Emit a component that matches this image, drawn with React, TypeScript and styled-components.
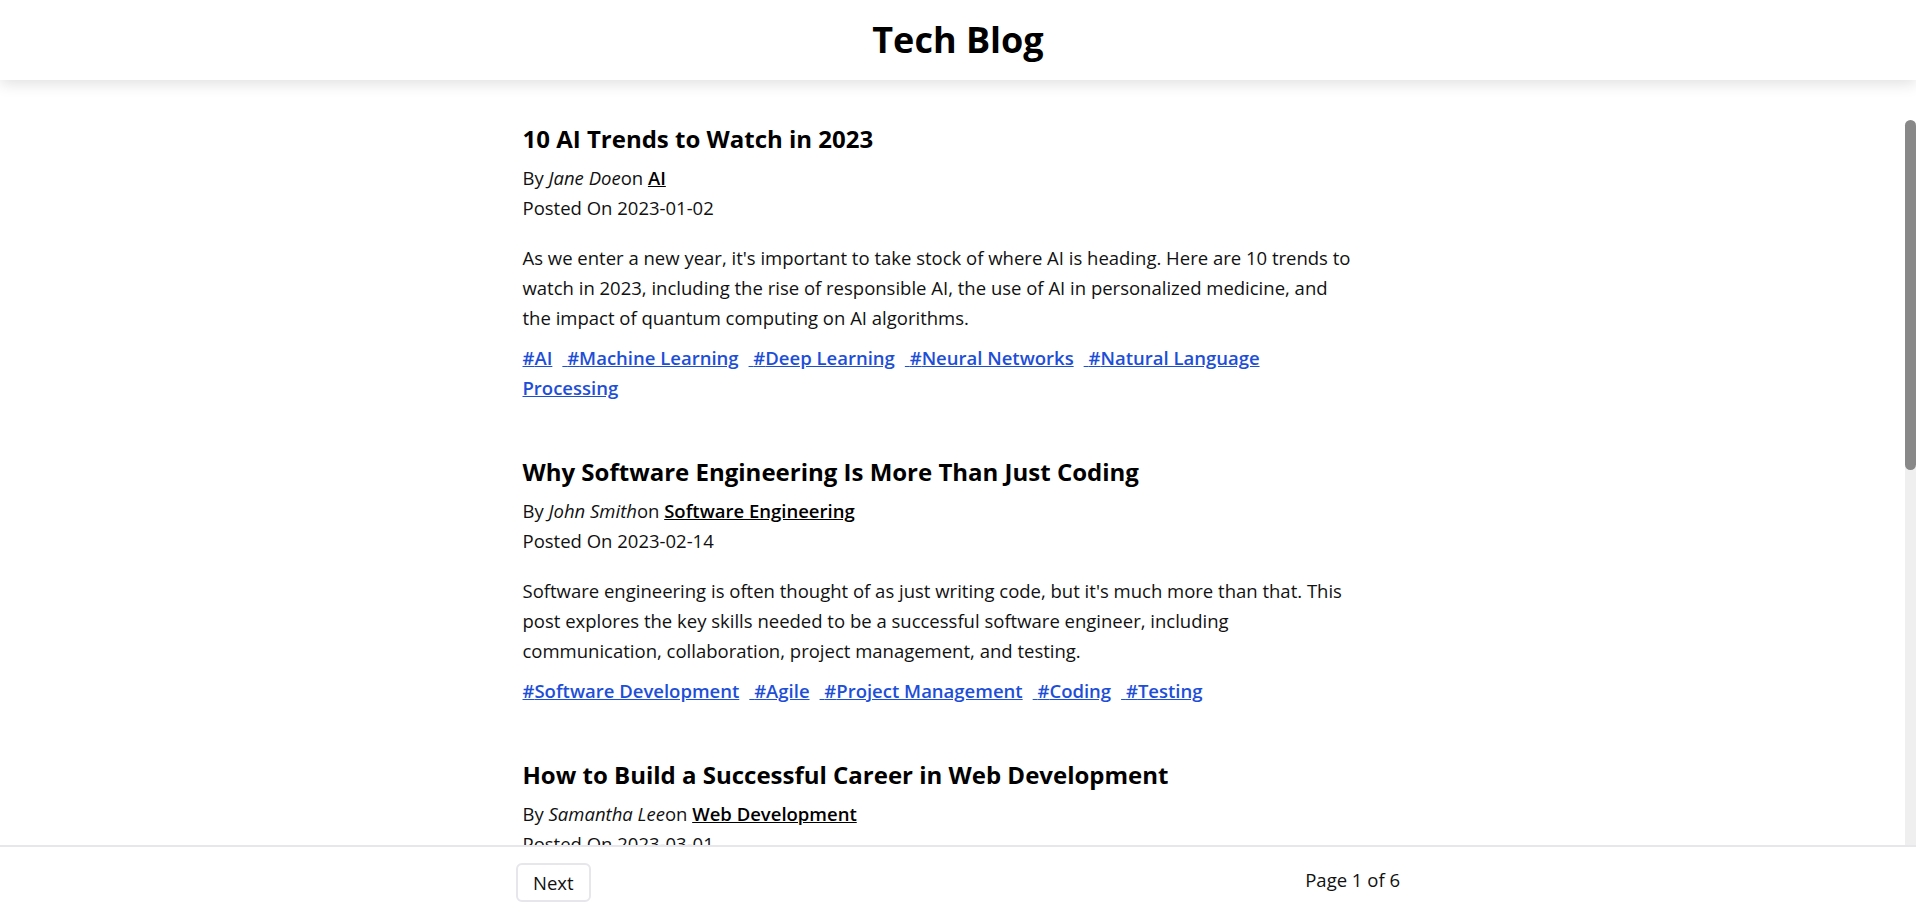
import React from "react";
import styled, { createGlobalStyle } from "styled-components";

const GlobalStyle = createGlobalStyle`
  html, body {
    margin: 0;
    padding: 0;
    height: 100%;
    background: #ffffff;
    overflow: hidden;
  }
  body {
    font-family: "Open Sans", "Noto Sans", "Liberation Sans", sans-serif;
    color: #111111;
  }
  #root { height: 100%; }
  * { box-sizing: border-box; }
`;

const Shell = styled.div`
  display: flex;
  flex-direction: column;
  height: 100vh;
`;

const Header = styled.header`
  position: relative;
  z-index: 2;
  flex: 0 0 80px;
  display: flex;
  align-items: center;
  justify-content: center;
  background: #ffffff;
  box-shadow: 0 4px 14px rgba(0, 0, 0, 0.12);
`;

const SiteTitle = styled.h1`
  margin: 0;
  font-size: 36px;
  line-height: 44px;
  font-weight: 700;
  color: #000;
`;

const Main = styled.main`
  flex: 1 1 auto;
  min-height: 0;
  display: flex;
`;

const Scroller = styled.div`
  flex: 1 1 auto;
  overflow: hidden;
`;

const Rail = styled.div`
  flex: 0 0 11px;
  display: flex;
  flex-direction: column;
  padding-top: 40px;
  background: #ffffff;
`;

const Track = styled.div`
  flex: 1 1 auto;
  background: #efefef;
  border-radius: 6px 6px 0 0;
`;

const Thumb = styled.div`
  height: 350px;
  background: #888888;
  border-radius: 6px;
`;

const Content = styled.div`
  width: 860px;
  margin: 0 auto;
  padding: 41px 28px 0 0;
`;

const Post = styled.article`
  margin-bottom: 51px;
  font-size: 18.5px;
  line-height: 30px;
`;

const PostTitle = styled.h2`
  margin: 0 0 6px;
  font-size: 24px;
  line-height: 36px;
  font-weight: 700;
  color: #000;
`;

const Meta = styled.div`
  margin: 0;
`;

const Author = styled.em`
  font-style: italic;
`;

const CategoryLink = styled.a`
  color: #000;
  font-weight: 600;
  text-decoration: underline;
  cursor: pointer;
`;

const Description = styled.p`
  margin: 20px 0 10px;
`;

const Tags = styled.div``;

const TagLink = styled.a`
  color: #1d4ed8;
  font-weight: 600;
  text-decoration: underline;
  margin-right: 10px;
  cursor: pointer;
`;

const Footer = styled.footer`
  flex: 0 0 72px;
  border-top: 2px solid #e6e6eb;
  background: #ffffff;
  display: flex;
  justify-content: center;
`;

const FooterInner = styled.div`
  width: 100%;
  max-width: 900px;
  padding: 0 8px;
  display: flex;
  align-items: center;
  justify-content: space-between;
`;

const PagerButton = styled.button`
  font-family: inherit;
  font-size: 18.5px;
  color: #111;
  background: #ffffff;
  border: 2px solid #e6e6eb;
  border-radius: 6px;
  padding: 0 15px;
  height: 39px;
  cursor: pointer;
`;

const PageInfo = styled.span`
  font-size: 18.5px;
  color: #111;
  margin-bottom: 6px;
`;

type PostData = {
  title: string;
  author: string;
  category: string;
  date: string;
  description: string;
  tags: string[];
};

const posts: PostData[] = [
  {
    title: "10 AI Trends to Watch in 2023",
    author: "Jane Doe",
    category: "AI",
    date: "2023-01-02",
    description:
      "As we enter a new year, it's important to take stock of where AI is heading. Here are 10 trends to watch in 2023, including the rise of responsible AI, the use of AI in personalized medicine, and the impact of quantum computing on AI algorithms.",
    tags: ["AI", "Machine Learning", "Deep Learning", "Neural Networks", "Natural Language Processing"],
  },
  {
    title: "Why Software Engineering Is More Than Just Coding",
    author: "John Smith",
    category: "Software Engineering",
    date: "2023-02-14",
    description:
      "Software engineering is often thought of as just writing code, but it's much more than that. This post explores the key skills needed to be a successful software engineer, including communication, collaboration, project management, and testing.",
    tags: ["Software Development", "Agile", "Project Management", "Coding", "Testing"],
  },
  {
    title: "How to Build a Successful Career in Web Development",
    author: "Samantha Lee",
    category: "Web Development",
    date: "2023-03-01",
    description:
      "Web development is one of the most in-demand skills in tech today. In this post we share practical advice on building your portfolio, choosing the right frameworks to learn, and finding mentors who can help you grow as a developer.",
    tags: ["Web Development", "Career", "JavaScript", "Frontend", "Portfolio"],
  },
  {
    title: "Getting Started with Cloud Native Architecture",
    author: "Michael Brown",
    category: "Cloud Computing",
    date: "2023-03-18",
    description:
      "Cloud native architecture lets teams build applications that scale with demand. This post covers the building blocks you need to know, from containers and orchestration to service meshes, observability, and continuous delivery pipelines.",
    tags: ["Cloud", "Kubernetes", "Containers", "DevOps", "Microservices"],
  },
  {
    title: "The Basics of Cybersecurity Every Developer Should Know",
    author: "Emily Chen",
    category: "Security",
    date: "2023-04-05",
    description:
      "Security is no longer only the job of a dedicated team. Every developer should understand common threats such as injection attacks and cross-site scripting, along with the habits that keep code, credentials, and user data safe.",
    tags: ["Security", "Best Practices", "OWASP", "Encryption", "Authentication"],
  },
];

export default function App() {
  return (
    <>
      <GlobalStyle />
      <Shell>
        <Header>
          <SiteTitle>Tech Blog</SiteTitle>
        </Header>
        <Main>
          <Scroller>
            <Content>
              {posts.map((p) => (
                <Post key={p.title}>
                  <PostTitle>{p.title}</PostTitle>
                  <Meta>
                    By <Author>{p.author}</Author>on <CategoryLink>{p.category}</CategoryLink>
                  </Meta>
                  <Meta>Posted On {p.date}</Meta>
                  <Description>{p.description}</Description>
                  <Tags>
                    {p.tags.map((t, i) => (
                      <TagLink key={t}>
                        {i > 0 ? " " : ""}#{t}
                      </TagLink>
                    ))}
                  </Tags>
                </Post>
              ))}
            </Content>
          </Scroller>
          <Rail aria-hidden="true">
            <Track>
              <Thumb />
            </Track>
          </Rail>
        </Main>
        <Footer>
          <FooterInner>
            <PagerButton>Next</PagerButton>
            <PageInfo>Page 1 of 6</PageInfo>
          </FooterInner>
        </Footer>
      </Shell>
    </>
  );
}
